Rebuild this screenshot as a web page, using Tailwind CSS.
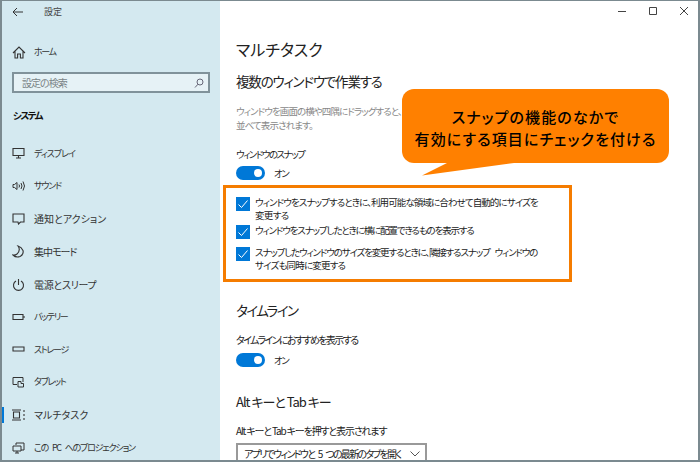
<!DOCTYPE html>
<html lang="ja">

<head>
    <meta charset="UTF-8">
    <title>設定</title>
    <script src="https://cdn.jsdelivr.net/npm/@tailwindcss/browser@4"></script>
</head>

<body class="w-[700px] h-[462px] overflow-hidden bg-white font-['Noto_Sans_CJK_JP','Noto_Sans',sans-serif] [font-feature-settings:'palt'] text-[#222]">

    <div class="relative w-[700px] h-[462px] flex overflow-hidden border-t border-b-2 border-l-2 border-r-2 border-[#7b8a90]">

        <!-- sidebar -->
        <aside class="w-[218px] h-full shrink-0 overflow-hidden bg-[#d4e9f0]">
            <div class="h-[22px] flex items-center">
                <svg class="ml-[10px] w-[11px] h-[10px]" viewBox="0 0 11 10" fill="none" stroke="#333" stroke-width="1"><path d="M11 5H1M5 1 1 5l4 4" /></svg>
                <span class="ml-[21px] text-[9px] text-[#444]">設定</span>
            </div>
            <div class="h-[32px] mt-[13px] flex items-center">
                <svg class="ml-[10px] w-[14px] h-[13px]" viewBox="0 0 14 13" fill="none" stroke="#333" stroke-width="1.1"><path d="M1 7 7 1l6 6M3 5.500V12h2.600V8h2.800v4H11V5.500" /></svg>
                <span class="ml-[8px] text-[9px] tracking-[-1.4px] text-[#333]">ホーム</span>
            </div>
            <div class="mt-[4px] mx-[10px] h-[21px] border-2 border-[#80929a] bg-[#e6f2f6] flex items-center justify-between pl-[8px] pr-[4px]">
                <span class="text-[10px] tracking-[-1px] text-[#7a8487]">設定の検索</span>
                <svg class="w-[10px] h-[10px]" viewBox="0 0 10 10" fill="none" stroke="#667" stroke-width="1"><circle cx="6" cy="4" r="3" /><path d="M4 6.200 1 9.500" /></svg>
            </div>
            <div class="h-[20px] mt-[12px] flex items-center pl-[11px] text-[9.5px] tracking-[-1.5px] font-bold text-[#111]">システム</div>

            <nav class="mt-[12px] flex flex-col">
                <div class="h-[32.7px] flex items-center">
                    <svg class="ml-[10px] w-[13px] h-[12px]" viewBox="0 0 13 12" fill="none" stroke="#333" stroke-width="1.1"><path d="M1 1.500h11v7H1zM4 11h5M6.500 8.500V11" /></svg>
                    <span class="ml-[9px] text-[9px] tracking-[-1px] text-[#333]">ディスプレイ</span>
                </div>
                <div class="h-[32.7px] flex items-center">
                    <svg class="ml-[10px] w-[13px] h-[12px]" viewBox="0 0 13 12" fill="none" stroke="#333" stroke-width="1"><path d="M1 4.500v3h1.500L5 9.500v-7L2.500 4.500zM7 4.500q1 1.500 0 3M9 3q2 3 0 6M11 1.500q3 4.500 0 9" /></svg>
                    <span class="ml-[9px] text-[9px] tracking-[-1.2px] text-[#333]">サウンド</span>
                </div>
                <div class="h-[32.7px] flex items-center">
                    <svg class="ml-[10px] w-[13px] h-[12px]" viewBox="0 0 13 12" fill="none" stroke="#333" stroke-width="1.1"><path d="M1 1h11v8H8.500L6.500 11 6 9H1z" /></svg>
                    <span class="ml-[9px] text-[10px] text-[#333]">通知とアクション</span>
                </div>
                <div class="h-[32.7px] flex items-center">
                    <svg class="ml-[10px] w-[13px] h-[13px]" viewBox="0 0 13 13" fill="none" stroke="#333" stroke-width="1.1"><path d="M6 1q3 4-1 8-2 1.500-4 1 3 3 7 1.500 4-2 3-6Q9.500 2 6 1z" /></svg>
                    <span class="ml-[9px] text-[10px] tracking-[-1px] text-[#333]">集中モード</span>
                </div>
                <div class="h-[32.7px] flex items-center">
                    <svg class="ml-[10px] w-[13px] h-[13px]" viewBox="0 0 13 13" fill="none" stroke="#333" stroke-width="1.1"><path d="M4 3a5 5 0 1 0 5 0M6.500 1v6" /></svg>
                    <span class="ml-[9px] text-[10px] tracking-[-0.3px] text-[#333]">電源とスリープ</span>
                </div>
                <div class="h-[32.7px] flex items-center">
                    <svg class="ml-[10px] w-[13px] h-[8px]" viewBox="0 0 13 8" fill="none" stroke="#333" stroke-width="1.1"><path d="M1 1.500h10v5H1z" /><path d="M12 3v2" /></svg>
                    <span class="ml-[9px] text-[9px] tracking-[-1.3px] text-[#333]">バッテリー</span>
                </div>
                <div class="h-[32.7px] flex items-center">
                    <svg class="ml-[10px] w-[13px] h-[6px]" viewBox="0 0 13 6" fill="none" stroke="#333" stroke-width="1.1"><path d="M1 1h11v4H1z" /></svg>
                    <span class="ml-[9px] text-[9px] tracking-[-1.3px] text-[#333]">ストレージ</span>
                </div>
                <div class="h-[32.7px] flex items-center">
                    <svg class="ml-[10px] w-[13px] h-[12px]" viewBox="0 0 13 12" fill="none" stroke="#333" stroke-width="1"><path d="M5 8.500H1v-7h10V6" /><path d="M6 5.500h3v2h2.500V11H6z" /></svg>
                    <span class="ml-[9px] text-[9px] tracking-[-1.2px] text-[#333]">タブレット</span>
                </div>
                <div class="relative h-[32.7px] flex items-center">
                    <span class="absolute left-0 top-[8px] w-[2px] h-[16px] bg-[#0078d7]"></span>
                    <svg class="ml-[10px] w-[13px] h-[12px]" viewBox="0 0 13 12" fill="none" stroke="#333" stroke-width="1.1"><path d="M0 1h9M0 11h9M1.500 3h6v6h-6zM12 1v2M12 5v2M12 9v2" /></svg>
                    <span class="ml-[9px] text-[10px] text-[#333]">マルチタスク</span>
                </div>
                <div class="h-[32.7px] flex items-center">
                    <svg class="ml-[10px] w-[13px] h-[12px]" viewBox="0 0 13 12" fill="none" stroke="#333" stroke-width="1"><path d="M4 3V1h8v7H9M1 4h8v5H1zM3 11h4M5 9v2" /></svg>
                    <span class="ml-[9px] text-[9px] tracking-[-1.2px] [word-spacing:3px] text-[#333]">この PC へのプロジェクション</span>
                </div>
            </nav>
        </aside>

        <!-- content -->
        <main class="relative flex-1 pl-[16px]">
            <div class="absolute right-[9px] top-[5px] flex items-center gap-[21px]">
                <svg class="w-[10px] h-[10px]" viewBox="0 0 10 10" stroke="#444"><path d="M1 5.500h8" /></svg>
                <svg class="w-[10px] h-[10px]" viewBox="0 0 10 10" fill="none" stroke="#444"><path d="M1.500 1.500h7v7h-7z" /></svg>
                <svg class="w-[10px] h-[10px]" viewBox="0 0 10 10" stroke="#444"><path d="M1 1l8 8M9 1 1 9" /></svg>
            </div>

            <h1 class="mt-[36px] h-[24px] leading-[24px] text-[16px] text-[#222]">マルチタスク</h1>
            <h2 class="mt-[10px] h-[20px] leading-[20px] text-[13.5px] tracking-[-1.2px] text-[#222]">複数のウィンドウで作業する</h2>
            <p class="mt-[13px] whitespace-nowrap text-[9.5px] tracking-[-0.9px] leading-[14px] text-[#888]">ウィンドウを画面の横や四隅にドラッグすると、<br>並べて表示されます。</p>
            <p class="mt-[15px] h-[14px] leading-[14px] text-[9.5px] tracking-[-1.5px] text-[#222]">ウィンドウのスナップ</p>
            <div class="mt-[5px] flex items-center">
                <span class="relative w-[29px] h-[14px] rounded-full bg-[#0078d7]"><span class="absolute right-[3px] top-[3px] w-[8px] h-[8px] rounded-full bg-white"></span></span>
                <span class="ml-[9px] text-[9.5px] tracking-[-1.5px] leading-[14px]">オン</span>
            </div>

            <!-- snap options -->
            <div class="mt-[17px] flex flex-col text-[9.5px] leading-[13px] text-[#222] whitespace-nowrap">
                <div class="flex gap-[5px] h-[28px]">
                    <svg class="shrink-0 w-[14px] h-[14px]" viewBox="0 0 14 14"><rect width="14" height="14" fill="#0078d7" /><path d="M2.500 7.500 5.500 10.500 11.500 3.500" fill="none" stroke="#fff" /></svg>
                    <span class="-mt-[1px] tracking-[-0.65px]"><span class="tracking-[-0.9px]">ウィンドウをスナップするときに、利用可能な領域に合わせて自動的にサイズを</span><br>変更する</span>
                </div>
                <div class="flex gap-[5px] h-[22px]">
                    <svg class="shrink-0 w-[14px] h-[14px]" viewBox="0 0 14 14"><rect width="14" height="14" fill="#0078d7" /><path d="M2.500 7.500 5.500 10.500 11.500 3.500" fill="none" stroke="#fff" /></svg>
                    <span class="-mt-[1px] tracking-[-1.15px]">ウィンドウをスナップしたときに横に配置できるものを表示する</span>
                </div>
                <div class="flex gap-[5px] h-[26px]">
                    <svg class="shrink-0 w-[14px] h-[14px]" viewBox="0 0 14 14"><rect width="14" height="14" fill="#0078d7" /><path d="M2.500 7.500 5.500 10.500 11.500 3.500" fill="none" stroke="#fff" /></svg>
                    <span class="-mt-[1px] tracking-[-0.8px]"><span class="tracking-[-1.15px] [word-spacing:4px]">スナップしたウィンドウのサイズを変更するときに、隣接するスナップ ウィンドウの</span><br>サイズも同時に変更する</span>
                </div>
            </div>

            <h2 class="mt-[27px] h-[20px] leading-[20px] text-[13.5px] tracking-[-1.6px] text-[#222]">タイムライン</h2>
            <p class="mt-[13px] h-[14px] leading-[14px] text-[10px] tracking-[-1.6px]">タイムラインにおすすめを表示する</p>
            <div class="mt-[6px] flex items-center">
                <span class="relative w-[29px] h-[14px] rounded-full bg-[#0078d7]"><span class="absolute right-[3px] top-[3px] w-[8px] h-[8px] rounded-full bg-white"></span></span>
                <span class="ml-[9px] text-[9.5px] tracking-[-1.5px] leading-[14px]">オン</span>
            </div>
            <h2 class="mt-[25px] h-[20px] leading-[20px] text-[13px] tracking-[-1px] text-[#222]">Alt キーと Tab キー</h2>
            <p class="mt-[12px] h-[14px] leading-[14px] text-[10px] tracking-[-1.15px]">Alt キーと Tab キーを押すと表示されます</p>
            <div class="mt-[5px] w-[191px] h-[30px] border-2 border-[#999] flex justify-between pl-[6px] pr-[5px] pt-[1px]">
                <span class="text-[10px] tracking-[-1.7px] [word-spacing:3px] leading-[16px] whitespace-nowrap">アプリでウィンドウと 5 つの最新のタブを開く</span>
                <svg class="shrink-0 mt-[5px] w-[10px] h-[6px]" viewBox="0 0 10 6" fill="none" stroke="#555"><path d="M.5.5 5 5 9.500.5" /></svg>
            </div>
        </main>

        <!-- annotations -->
        <div class="absolute left-[221px] top-[184px] w-[349px] h-[97px] border-[3px] border-[#f57c00]"></div>
        <div class="absolute left-[400px] top-[88px] w-[267px] h-[74px] pt-[3px] rounded-[12px] bg-[#ff8000] flex items-center justify-center text-center text-[15px] tracking-[1.1px] leading-[22px] font-medium text-black">
            <span>スナップの機能のなかで<br>有効にする項目にチェックを付ける</span>
            <svg class="absolute left-[20px] top-[74px] w-[92px] h-[13px]" viewBox="0 0 92 13"><path d="M25 0 0 12.500 92 0z" fill="#ff8000" /></svg>
        </div>
    </div>
</body>

</html>
